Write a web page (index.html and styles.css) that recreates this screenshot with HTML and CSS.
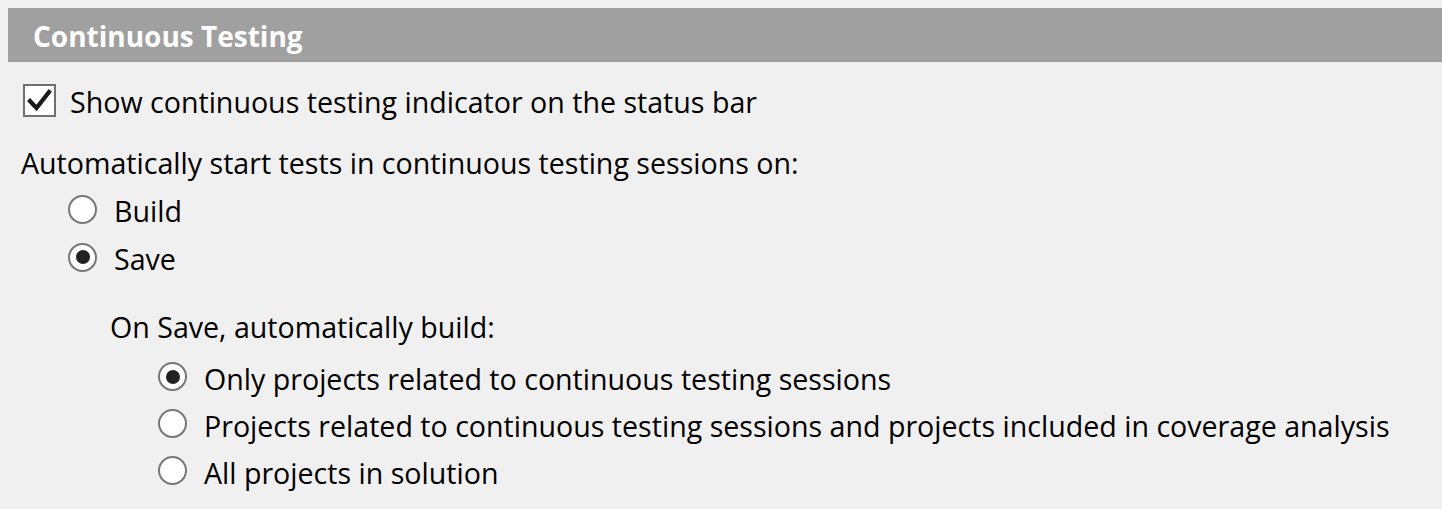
FILE: index.html
```html
<!DOCTYPE html>
<html>
<head>
<meta charset="utf-8">
<link rel="stylesheet" href="styles.css">
</head>
<body>
<div class="page">
  <div class="header">Continuous Testing</div>
  <div class="content">
    <label class="row check-row">
      <span class="checkbox">
        <svg width="29" height="29" viewBox="0 0 29 29"><path d="M5 15 L11.5 22 L24 6" fill="none" stroke="#1a1a1a" stroke-width="4.2" stroke-linecap="square" stroke-linejoin="miter"/></svg>
      </span>
      <span class="label">Show continuous testing indicator on the status bar</span>
    </label>
    <div class="row text-row"><span class="label">Automatically start tests in continuous testing sessions on:</span></div>
    <div class="group level1">
      <label class="row radio-row"><span class="radio"></span><span class="label">Build</span></label>
      <label class="row radio-row"><span class="radio checked"></span><span class="label">Save</span></label>
    </div>
    <div class="row text-row sub-title"><span class="label">On Save, automatically build:</span></div>
    <div class="group level2">
      <label class="row radio-row"><span class="radio checked"></span><span class="label">Only projects related to continuous testing sessions</span></label>
      <label class="row radio-row"><span class="radio"></span><span class="label">Projects related to continuous testing sessions and projects included in coverage analysis</span></label>
      <label class="row radio-row"><span class="radio"></span><span class="label">All projects in solution</span></label>
    </div>
  </div>
</div>
</body>
</html>
```
FILE: styles.css
```css
html, body {
  margin: 0;
  padding: 0;
  background: #f0f0f0;
}
body {
  padding: 8px 0 0 8px;
  font-family: "Open Sans", "Noto Sans", sans-serif;
  font-size: 28.6px;
  color: #000;
  overflow: hidden;
}
.page {
  width: 1434px;
}
.header {
  height: 54px;
  background: #a0a0a0;
  color: #fff;
  font-weight: 700;
  font-size: 28px;
  display: flex;
  align-items: center;
  padding-left: 25px;
  padding-top: 2px;
  border-bottom: 1px solid #9a9a9a;
  box-sizing: border-box;
}
.content {
  display: flex;
  flex-direction: column;
  padding-left: 13px;
}
.row {
  display: flex;
  align-items: center;
  height: 48px;
  white-space: nowrap;
}
.label {
  padding-top: 3px;
}
.check-row {
  margin-top: 14px;
}
.checkbox {
  width: 33px;
  height: 33px;
  box-sizing: border-box;
  border: 2px solid #707070;
  background: #fff;
  display: flex;
  align-items: center;
  justify-content: center;
  margin: 0 14px 0 2px;
}
.text-row {
  margin-top: 13px;
}
.level1 {
  padding-left: 47px;
  display: flex;
  flex-direction: column;
}
.sub-title {
  margin-top: 20px;
  padding-left: 89px;
}
.level2 {
  padding-left: 137px;
  display: flex;
  flex-direction: column;
  margin-top: 4px;
}
.level2 .row {
  height: 47px;
}
.radio {
  width: 29px;
  height: 29px;
  box-sizing: border-box;
  border: 2px solid #777;
  border-radius: 50%;
  background: #fff;
  display: flex;
  align-items: center;
  justify-content: center;
  margin-right: 17px;
}
.radio.checked::after {
  content: "";
  width: 14px;
  height: 14px;
  border-radius: 50%;
  background: #222;
}
```
